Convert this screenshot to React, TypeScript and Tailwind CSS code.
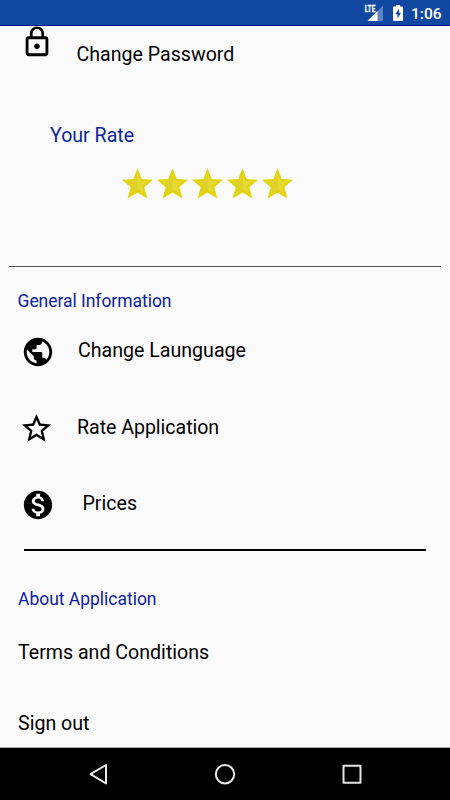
import type { ReactNode } from 'react';
import { MdLockOutline, MdMonetizationOn, MdPublic, MdStarBorder } from 'react-icons/md';

const StatusBar = () => (
    <header className="flex h-[26px] items-center justify-end border-b border-[#06108f] bg-[#0f47a1] pr-[8.5px] text-white">
        <svg className="h-[18px] w-[20px]" viewBox="0 0 20 18">
            <path d="M19 1.500v15.500H3.500z" fill="#5f84c4" />
            <path d="M13.500 7v10H3.500z" fill="#fff" />
            <path d="M0 0h12v8.500H0z" fill="#0f47a1" />
            <text x="0.800" y="8" fill="#fff" stroke="#fff" strokeWidth="0.300" fontFamily="Roboto" fontSize="9" fontWeight="700" textLength="10.500" lengthAdjust="spacingAndGlyphs">LTE</text>
        </svg>
        <svg className="ml-[9px] h-[16px] w-[10px]" viewBox="0 0 10 16">
            <path d="M3 0h4v1.600h2.200c.5 0 .8.300.8.800v12.800c0 .5-.3.800-.8.800H.8c-.5 0-.8-.3-.8-.8V2.400c0-.5.3-.8.800-.8H3z" fill="#fff" />
            <path d="M6 3.800L2.200 9.300h2.300V13.500L8 7.800H6z" fill="#0f47a1" />
        </svg>
        <span className="mt-0.5 ml-[7.5px] text-[15.5px] leading-6 font-medium">1:06</span>
    </header>
);

const RatingStar = () => (
    <svg className="h-[31px] w-[31px]" viewBox="0 0 31 31">
        <path d="M15.500 0.300L19.700 11 31 11.800 22.300 19.200 25.400 30.600 15.500 24.600 5.600 30.600 8.700 19.200 0 11.800 11.300 11z" fill="#e2d30b" />
        <path d="M15.500 6L18.200 13 25.500 13.500 19.900 18.200 21.700 25 15.500 21.200 9.300 25 11.100 18.200 5.500 13.500 12.800 13z" fill="#e5d936" />
        <path d="M15.500 6v15.200L9.300 25 11.100 18.200 5.500 13.500 12.800 13z" fill="#dfd02b" />
    </svg>
);

type RowProps = {
    icon: ReactNode;
    className: string;
    children: ReactNode;
};

const Row = ({ icon, className, children }: RowProps) => (
    <div className={`flex items-start ${className}`}>
        {icon}
        {children}
    </div>
);

const NavigationBar = () => (
    <nav className="flex h-[53px] items-center justify-between border-t border-[#a8a8a8] bg-black px-[85px]">
        <svg className="h-[26px] w-[26px]" viewBox="0 0 26 26" fill="none" stroke="#ececec" strokeWidth="2" strokeLinejoin="round">
            <path d="M21 4v18.500L5.500 13.200z" />
        </svg>
        <svg className="h-[26px] w-[26px]" viewBox="0 0 26 26" fill="none" stroke="#ececec" strokeWidth="2">
            <circle cx="13" cy="13.200" r="9.200" />
        </svg>
        <svg className="h-[26px] w-[26px]" viewBox="0 0 26 26" fill="none" stroke="#e4e4e4" strokeWidth="2" strokeLinejoin="round">
            <rect x="4.500" y="4.800" width="17" height="17" />
        </svg>
    </nav>
);

export default function App() {
    return (
        <div className="flex h-[800px] w-[450px] flex-col overflow-hidden bg-[#fafafa] font-['Roboto',sans-serif] text-[19.6px] leading-6 text-black">
            <StatusBar />

            <main className="flex-1">
                <section className="h-[240px]">
                    <Row className="h-[98px] pl-[19.5px]" icon={<MdLockOutline className="-mt-px size-[34px]" />}>
                        <span className="mt-[17px] ml-[23px]">Change Password</span>
                    </Row>
                    <h2 className="pl-[50px] text-[#0c2698]">Your Rate</h2>
                    <div className="mt-[20px] ml-[122px] flex gap-1">
                        <RatingStar />
                        <RatingStar />
                        <RatingStar />
                        <RatingStar />
                        <RatingStar />
                    </div>
                </section>

                <hr className="mx-[9px] border-[#555]" />

                <section className="h-[282px] pt-[22px]">
                    <h2 className="pl-[17.5px] text-[17.5px] tracking-[-0.04px] text-[#0c20a0]">General Information</h2>
                    <Row className="h-[77px] pt-[22px] pl-[20.5px]" icon={<MdPublic className="size-[34px]" />}>
                        <span className="mt-[4px] ml-[23.5px]">Change Launguage</span>
                    </Row>
                    <Row className="h-[76px] pt-[21px] pl-[19px]" icon={<MdStarBorder className="size-[35px]" />}>
                        <span className="mt-[5px] ml-[23px] tracking-[-0.04px]">Rate Application</span>
                    </Row>
                    <Row className="pt-[22px] pl-[20.5px]" icon={<MdMonetizationOn className="size-[34px]" />}>
                        <span className="mt-[4px] ml-[28px]">Prices</span>
                    </Row>
                </section>

                <hr className="mx-[24px] border-t-2 border-black" />

                <section className="pt-[36px] pl-[18px]">
                    <h2 className="text-[17.5px] tracking-[-0.02px] text-[#0c20a0]">About Application</h2>
                    <p className="mt-[30px]">Terms and Conditions</p>
                    <p className="mt-[47px]">Sign out</p>
                </section>
            </main>

            <NavigationBar />
        </div>
    );
}
